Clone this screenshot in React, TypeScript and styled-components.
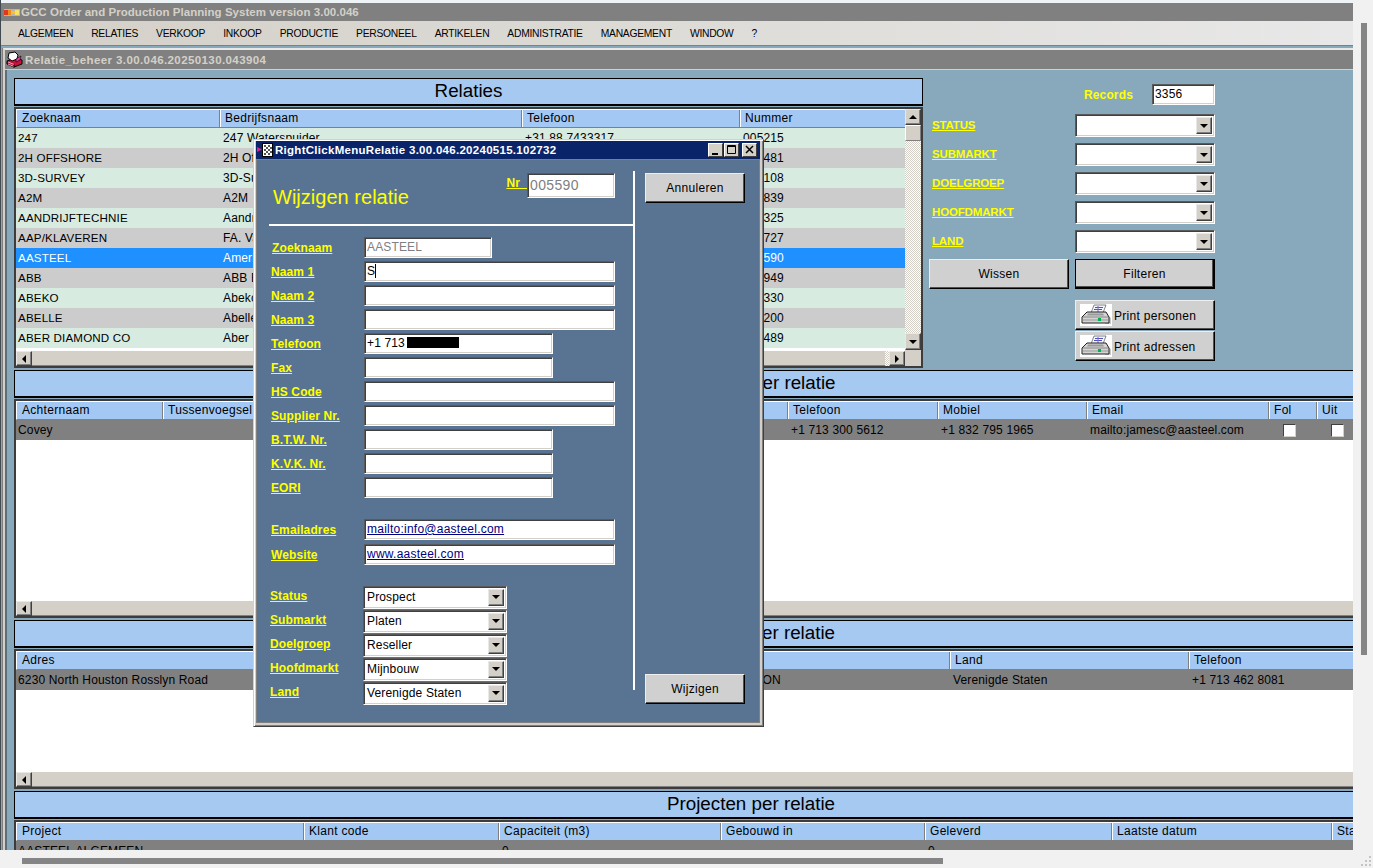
import React from "react";
import styled, { createGlobalStyle, css } from "styled-components";

const Global = createGlobalStyle`
  html, body { margin: 0; padding: 0; height: 100%; overflow: hidden; background: #f1f1f1; }
  #root { height: 100%; }
  * { box-sizing: border-box; }
  svg { flex: none; }
  body { font: 12px "Liberation Sans", Arial, sans-serif; letter-spacing: .15px; color: #000; }
`;

const sunken = css`
  background: #fff;
  border: 1px solid;
  border-color: #5a5a5a #fff #fff #5a5a5a;
  box-shadow: inset 1px 1px 0 #404040, inset -1px -1px 0 #d4d0c8;
`;

const Shell = styled.div`
  display: grid;
  grid-template-columns: 1353px 20px;
  grid-template-rows: 850px 18px;
  width: 1373px;
  height: 868px;
  overflow: hidden;
`;
const Viewport = styled.div`
  position: relative;
  overflow: hidden;
  background: #88a9bb;
  border-left: 1px solid #3f4a52;
`;
const TopGap = styled.div`height: 3px; background: #eef3f6;`;
const AppBar = styled.div`
  height: 18px;
  background: #808080;
  color: #d4d0c8;
  font-weight: 700;
  font-size: 11.5px;
  letter-spacing: .04px;
  display: flex;
  align-items: center;
  gap: 1px;
  padding-left: 1px;
  white-space: nowrap;
`;
const MenuBar = styled.div`
  height: 25px;
  background: linear-gradient(to right, #d4d0c8 0, #dcdad5 45%, #e8e8e8 100%);
  display: flex;
  align-items: center;
  gap: 18px;
  padding-left: 17px;
  border-bottom: 1px solid #808080;
`;
const MenuItem = styled.span`font-size: 10.3px; letter-spacing: -.26px; white-space: nowrap;`;
const MdiFrame = styled.div`
  margin: 2px 0 0 2px;
  width: 1600px;
  border-top: 2px solid #e8e8e8;
  border-left: 2px solid #d4d0c8;
  box-shadow: -1px 0 0 #808080;
`;
const MdiTitle = styled.div`
  height: 20px;
  background: #808080;
  color: #d4d0c8;
  font-weight: 700;
  font-size: 11.5px;
  letter-spacing: .4px;
  display: flex;
  align-items: center;
  gap: 2px;
  padding-left: 1px;
  border-bottom: 1px solid #d4d0c8;
  white-space: nowrap;
`;
const Client = styled.div`
  padding: 8px 0 0 9px;
  height: 800px;
  background: #88a9bb;
  display: flex;
  flex-direction: column;
  box-shadow: inset 2px 0 0 #5a6f7c;
`;
const TopSection = styled.div`display: flex; flex: none;`;
const TopLeft = styled.div`width: 909px;`;
const Heading = styled.div`
  flex: none;
  height: 27px;
  margin-bottom: 2px;
  width: ${p => p.$w || 1474}px;
  background: #a5c9f1;
  border: 1px solid #000;
  box-shadow: 0 1px 0 #000;
  font-size: 18.8px;
  letter-spacing: 0;
  padding: 0 0 1px 0;
  display: flex;
  align-items: center;
  justify-content: center;
  white-space: nowrap;
`;
const Frame = styled.div`
  flex: none;
  width: ${p => p.$w || 1474}px;
  height: ${p => p.$h}px;
  margin-bottom: 2px;
  background: #fff;
  border: 2px solid #3c3c3c;
  display: grid;
  grid-template-columns: ${p => (p.$vs ? "1fr 16px" : "1fr")};
  grid-template-rows: 1fr ${p => (p.$noHs ? "" : "16px")};
  overflow: hidden;
`;
const TableArea = styled.div`overflow: hidden; min-width: 0;`;
const HeadRow = styled.div`
  display: grid;
  grid-template-columns: ${p => p.$cols};
  height: 19px;
  background: #a3c8f4;
  border-top: 1px solid #fff;
  border-bottom: 1px solid #808080;
  border-left: 1px solid #fff;
`;
const HeadCell = styled.div`
  padding-left: 4px;
  line-height: 17px;
  letter-spacing: .3px;
  white-space: nowrap;
  overflow: hidden;
  &:first-child { padding-left: 5px; }
  & + & { border-left: 1px solid #fff; box-shadow: inset 1px 0 0 #a3c8f4, -1px 0 0 #808080; }
`;
const DataRow = styled.div`
  display: grid;
  grid-template-columns: ${p => p.$cols};
  height: 20px;
  background: ${p => p.$bg};
  color: ${p => (p.$sel ? "#fff" : "#000")};
`;
const DataCell = styled.div`
  padding-left: 4px;
  line-height: 20px;
  white-space: nowrap;
  overflow: hidden;
  font-size: ${p => (p.$caps ? "11.6px" : "12px")};
  &:first-child { padding-left: 2px; }
`;
const CheckCell = styled.div`
  width: 34px;
  height: 20px;
  display: flex;
  align-items: center;
  justify-content: center;
`;
const CheckBox = styled.span`
  width: 13px; height: 13px;
  background: #fff;
  border: 1px solid;
  border-color: #404040 #d4d0c8 #d4d0c8 #404040;
`;
const HScroll = styled.div`
  display: flex;
  background: #d4d0c8;
  border-top: 1px solid #fff;
  box-shadow: inset 0 -1px 0 #808080;
  overflow: hidden;
`;
const Dither = styled.div`
  background: conic-gradient(#fff 25%, #d4d0c8 0 50%, #fff 0 75%, #d4d0c8 0) 0 0 / 2px 2px;
`;
const HFill = styled.div`flex: 1;`;
const HDither = styled(Dither)`width: 4px;`;
const VScroll = styled.div`
  display: flex;
  flex-direction: column;
`;
const VThumb = styled.div`
  height: 16px;
  background: #d4d0c8;
  border: 1px solid;
  border-color: #fff #808080 #808080 #fff;
`;
const VDither = styled(Dither)`flex: 1;`;
const Corner = styled.div`background: #d4d0c8;`;
const ArrowBtn = styled.div`
  flex: none;
  width: ${p => p.$w || 16}px;
  height: ${p => p.$h || 16}px;
  background: #d4d0c8;
  border: 1px solid;
  border-color: #e8e8e8 #404040 #404040 #e8e8e8;
  box-shadow: inset -1px -1px 0 #808080;
  display: flex;
  align-items: center;
  justify-content: center;
`;
const Tri = styled.span`
  width: 0; height: 0;
  border-style: solid;
  ${p => p.$dir === "up" && "border-width: 0 4px 4px; border-color: transparent transparent #000;"}
  ${p => p.$dir === "down" && "border-width: 4px 4px 0; border-color: #000 transparent transparent;"}
  ${p => p.$dir === "left" && "border-width: 4px 4px 4px 0; border-color: transparent #000 transparent transparent;"}
  ${p => p.$dir === "right" && "border-width: 4px 0 4px 4px; border-color: transparent transparent transparent #000;"}
`;

/* right filter panel */
const FilterPanel = styled.div`
  width: 286px;
  margin-left: 6px;
  padding-top: 6px;
  display: flex;
  flex-direction: column;
  gap: 6px;
`;
const RecordsRow = styled.div`
  display: flex;
  justify-content: flex-end;
  align-items: center;
  gap: 19px;
  margin-bottom: 3px;
`;
const RecordsLabel = styled.span`color: #ffff00; font-weight: 700;`;
const RecordsBox = styled.div`
  ${sunken};
  width: 63px;
  height: 21px;
  padding-left: 2px;
  line-height: 19px;
`;
const FilterRow = styled.div`
  display: grid;
  grid-template-columns: 146px 140px;
  align-items: center;
`;
const YLabel = styled.span`
  color: #ffff00;
  font-weight: 700;
  font-size: ${p => (p.$caps ? "11.5px" : "12px")};
  text-decoration: underline;
  letter-spacing: ${p => (p.$caps ? "-.15px" : ".12px")};
  padding-left: ${p => p.$pad ?? 0}px;
  margin-top: ${p => p.$up ?? 0}px;
  white-space: nowrap;
`;
const Combo = styled.div`
  ${sunken};
  width: ${p => p.$w}px;
  height: ${p => p.$h}px;
  display: flex;
  align-items: center;
  justify-content: space-between;
  padding: 2px 2px 2px 3px;
  white-space: nowrap;
`;
const ComboBtn = styled.div`
  flex: none;
  width: 16px;
  height: 17px;
  background: #d4d0c8;
  border: 1px solid;
  border-color: #e8e8e8 #404040 #404040 #e8e8e8;
  box-shadow: inset -1px -1px 0 #808080;
  display: flex;
  align-items: center;
  justify-content: center;
`;
const ButtonRow = styled.div`display: flex; gap: 6px;`;
const WinButton = styled.div`
  width: ${p => p.$w || 140}px;
  height: 30px;
  background: #d0d0d0;
  border: 1px solid;
  border-color: #eee #000 #000 #eee;
  box-shadow: inset -1px -1px 0 #505050;
  letter-spacing: .3px;
  display: flex;
  align-items: center;
  justify-content: center;
  ${p => p.$def && "border: 2px solid #000; border-top-width: 1px; border-left-width: 1px;"}
`;
const PrintStack = styled.div`
  display: flex;
  flex-direction: column;
  align-items: flex-end;
  gap: 1px;
  margin-top: 5px;
`;
const PrintButton = styled(WinButton)`
  justify-content: flex-start;
  gap: 2px;
  padding: 1px 0 0 4px;
`;
const PrintIcon = styled.span`
  flex: none;
  width: 32px; height: 22px;
  margin-top: -1px;
  background: #fff;
  display: block;
  line-height: 0;
`;

/* dialog */
const Dialog = styled.div`
  position: absolute;
  left: 252px;
  top: 139px;
  width: 511px;
  height: 588px;
  background: #d4d0c8;
  border: 1px solid;
  border-color: #d4d0c8 #404040 #404040 #d4d0c8;
  box-shadow: inset 1px 1px 0 #fff, inset -1px -1px 0 #808080;
  padding: 1px 3px 3px 2px;
  display: flex;
  flex-direction: column;
`;
const DialogTitle = styled.div`
  height: 18px;
  flex: none;
  background: #0a246a;
  color: #fff;
  font-weight: 700;
  font-size: 11.5px;
  letter-spacing: .28px;
  display: flex;
  align-items: center;
  padding: 0 3px 0 1px;
  gap: 1px;
  white-space: nowrap;
`;
const TitleSpacer = styled.span`flex: 1;`;
const CaptionBtn = styled.span`
  flex: none;
  width: 15px; height: 14px;
  margin-left: ${p => p.$gap || 0}px;
  background: #d4d0c8;
  border: 1px solid;
  border-color: #fff #404040 #404040 #fff;
  display: block;
  line-height: 0;
`;
const DialogBody = styled.div`
  flex: 1;
  background: #587492;
  border: 1px solid #808080;
  display: grid;
  grid-template-columns: 376px 2px 1fr;
`;
const FormPane = styled.div`display: flex; flex-direction: column;`;
const FormHead = styled.div`
  height: 64px;
  padding: 13px 18px 0 16px;
  display: flex;
  justify-content: space-between;
  align-items: flex-start;
`;
const FormTitle = styled.span`
  color: #ffff00;
  font-size: 20px;
  letter-spacing: .02px;
  margin-top: 13px;
`;
const NrGroup = styled.div`display: flex; align-items: flex-start;`;
const NrLabel = styled.span`
  color: #ffff00;
  font-weight: 700;
  text-decoration: underline;
  white-space: pre;
  margin-top: 3px;
`;
const NrBox = styled.div`
  ${sunken};
  width: 88px;
  height: 25px;
  color: #808080;
  font-size: 14px;
  letter-spacing: .35px;
  line-height: 22px;
  padding-left: 2px;
`;
const HRule = styled.div`height: 2px; margin-left: 12px; background: #fff;`;
const VRule = styled.div`margin-top: 11px; height: 519px; background: #fff;`;
const Fields = styled.div`
  padding: 11px 0 0 14px;
  display: flex;
  flex-direction: column;
`;
const FieldRow = styled.div`
  display: grid;
  grid-template-columns: 93px auto;
  justify-content: start;
  align-items: center;
  height: 21px;
  margin-bottom: ${p => p.$mb ?? 3}px;
`;
const Field = styled.div`
  ${sunken};
  width: ${p => p.$w}px;
  height: 21px;
  padding-left: 2px;
  line-height: 19px;
  white-space: nowrap;
  color: ${p => (p.$off ? "#808080" : "#000")};
`;
const Link = styled.span`color: #000080; text-decoration: underline; letter-spacing: .24px;`;
const Redacted = styled.span`
  display: inline-block;
  width: 52px; height: 11px;
  margin-left: -1px;
  background: #000;
  vertical-align: -1px;
`;
const Caret = styled.span`
  display: inline-block;
  width: 1px; height: 14px;
  background: #000;
  vertical-align: -3px;
`;
const ComboRow = styled.div`
  display: grid;
  grid-template-columns: 93px auto;
  justify-content: start;
  align-items: center;
  height: 24px;
  margin-left: -1px;
`;
const SidePane = styled.div`
  padding: 13px 15px 18px 10px;
  display: flex;
  flex-direction: column;
  justify-content: space-between;
  align-items: flex-start;
`;
const DialogButton = styled(WinButton)`width: 100px;`;

/* bottom & right browser scroll bars */
const RightStrip = styled.div`
  grid-row: 1 / 3;
  grid-column: 2;
  background: #f1f1f1;
  padding: 23px 6px 0 8px;
  position: relative;
`;
const RThumb = styled.div`width: 6px; height: 632px; background: #858585;`;
const BottomStrip = styled.div`
  background: #f1f1f1;
  border-bottom-left-radius: 6px;
  padding: 8px 0 0 22px;
`;
const BThumb = styled.div`width: 921px; height: 6px; background: #858585;`;
const Grip = styled.svg`position: absolute; right: 0; bottom: 0;`;

const AppIcon = () => (
  <svg width="18" height="9" viewBox="0 0 18 9">
    <rect x="2" y="1" width="16" height="7" fill="#b9b5ab" />
    <rect x="2" y="2" width="4" height="5" fill="#e0381c" />
    <rect x="6" y="2" width="3" height="5" fill="#f08a1e" />
    <rect x="9" y="3" width="4" height="3" fill="#f7c02e" />
    <rect x="13" y="2" width="4" height="5" fill="#f5e26a" />
  </svg>
);
const MdiIcon = () => (
  <svg width="17" height="17" viewBox="0 0 17 17">
    <path d="M1 10l8-3 7 2v4l-8 3-7-3z" fill="#c81038" stroke="#000" />
    <path d="M2 11l6 2.500M2 13l6 2.500" stroke="#f0a0c0" />
    <path d="M8 13.500v3" stroke="#000" />
    <path d="M2 7l1-5 6-1 3 3-1 4-5 2z" fill="#fff" stroke="#000" />
    <path d="M10 8l5-3-1 4-4 2z" fill="#e040a0" stroke="#000" strokeWidth=".6" />
  </svg>
);
const DlgIcon = () => (
  <svg width="17" height="16" viewBox="0 0 17 16">
    <rect x="5.500" y="1.500" width="10" height="13" fill="#fff" stroke="#000" />
    <path d="M7 3h2v2H7zM11 3h2v2h-2zM9 5h2v2H9zM13 5h2v2h-2zM7 7h2v2H7zM11 7h2v2h-2zM9 9h2v2H9zM13 9h2v2h-2zM7 11h2v2H7zM11 11h2v2h-2z" fill="#555" />
    <path d="M0 5l5 2.500L0 10z" fill="#e0208a" />
  </svg>
);
const Printer = () => (
  <PrintIcon>
    <svg width="32" height="22" viewBox="0 0 32 22">
      <path d="M25 20h6v-6l-4-3z" fill="#c8c8c8" />
      <path d="M11 9l3-8h12l-3 8z" fill="#f4f4ff" stroke="#555" strokeWidth=".7" />
      <path d="M15 3.500h8M14 5.500h8" stroke="#5050c0" />
      <path d="M18 2v6" stroke="#7070d0" />
      <path d="M7 8h19l3 5v6H2v-6z" fill="#d4d4d4" stroke="#222" />
      <path d="M3 13h25" stroke="#888" />
      <path d="M3 16h25" stroke="#999" />
      <path d="M8 9.500h15l1 2H7z" fill="#9a9a9a" />
      <rect x="18" y="14" width="3" height="3" fill="#00b050" />
    </svg>
  </PrintIcon>
);

const Arrow = ({ dir }: { dir: string }) => <Tri $dir={dir} />;

type GridData = {
  cols: number[];
  head: string[];
  rows: { cells: React.ReactNode[]; bg: string; sel?: boolean }[];
  caps?: boolean;
};

const DataGrid = ({ cols, head, rows, caps }: GridData) => {
  const tpl = cols.map(c => `${c}px`).join(" ");
  return (
    <TableArea>
      <HeadRow $cols={tpl}>
        {head.map((h, i) => <HeadCell key={i}>{h}</HeadCell>)}
      </HeadRow>
      {rows.map((r, i) => (
        <DataRow key={i} $cols={tpl} $bg={r.bg} $sel={r.sel}>
          {r.cells.map((c, j) => <DataCell key={j} $caps={caps && j === 0}>{c}</DataCell>)}
        </DataRow>
      ))}
    </TableArea>
  );
};

const HBar = ({ full }: { full?: boolean }) => (
  <HScroll>
    <ArrowBtn $h={15}><Arrow dir="left" /></ArrowBtn>
    <HFill />
    {full && <HDither />}
    {full && <ArrowBtn $h={15}><Arrow dir="right" /></ArrowBtn>}
  </HScroll>
);

const G = "#d8ebe0";
const K = "#cccccc";
const relaties: [string, string, string, string][] = [
  ["247", "247 Waterspuider", "+31 88 7433317", "005215"],
  ["2H OFFSHORE", "2H Offshore", "", "005481"],
  ["3D-SURVEY", "3D-Survey", "", "005108"],
  ["A2M", "A2M", "", "004839"],
  ["AANDRIJFTECHNIE", "Aandrijftechniek", "", "005325"],
  ["AAP/KLAVEREN", "FA. Van Klaveren", "", "004727"],
  ["AASTEEL", "American Steel", "", "005590"],
  ["ABB", "ABB B.V.", "", "004949"],
  ["ABEKO", "Abeko", "", "005330"],
  ["ABELLE", "Abelle", "", "005200"],
  ["ABER DIAMOND CO", "Aber Diamond", "", "005489"],
];
const menu = ["ALGEMEEN", "RELATIES", "VERKOOP", "INKOOP", "PRODUCTIE", "PERSONEEL", "ARTIKELEN", "ADMINISTRATIE", "MANAGEMENT", "WINDOW", "?"];
const filters = ["STATUS", "SUBMARKT", "DOELGROEP", "HOOFDMARKT", "LAND"];
const combos = [["Status", "Prospect"], ["Submarkt", "Platen"], ["Doelgroep", "Reseller"], ["Hoofdmarkt", "Mijnbouw"], ["Land", "Verenigde Staten"]];

export default function App() {
  return (
    <Shell>
      <Global />
      <Viewport>
        <TopGap />
        <AppBar><AppIcon />GCC Order and Production Planning System version 3.00.046</AppBar>
        <MenuBar>{menu.map(m => <MenuItem key={m}>{m}</MenuItem>)}</MenuBar>
        <MdiFrame>
          <MdiTitle><MdiIcon />Relatie_beheer 3.00.046.20250130.043904</MdiTitle>
          <Client>
            <TopSection>
              <TopLeft>
                <Heading $w={909}>Relaties</Heading>
                <Frame $w={909} $h={261} $vs>
                  <DataGrid
                    caps
                    cols={[203, 302, 218, 166]}
                    head={["Zoeknaam", "Bedrijfsnaam", "Telefoon", "Nummer"]}
                    rows={relaties.map((r, i) => ({
                      cells: r,
                      bg: i === 6 ? "#1e90ff" : i % 2 ? K : G,
                      sel: i === 6,
                    }))}
                  />
                  <VScroll>
                    <ArrowBtn $h={16}><Arrow dir="up" /></ArrowBtn>
                    <VThumb />
                    <VDither />
                    <ArrowBtn $h={17}><Arrow dir="down" /></ArrowBtn>
                  </VScroll>
                  <HBar full />
                  <Corner />
                </Frame>
              </TopLeft>
              <FilterPanel>
                <RecordsRow>
                  <RecordsLabel>Records</RecordsLabel>
                  <RecordsBox>3356</RecordsBox>
                </RecordsRow>
                {filters.map(f => (
                  <FilterRow key={f}>
                    <YLabel $caps $pad={3} $up={-2}>{f}</YLabel>
                    <Combo $w={140} $h={23}>
                      <span />
                      <ComboBtn><Arrow dir="down" /></ComboBtn>
                    </Combo>
                  </FilterRow>
                ))}
                <ButtonRow>
                  <WinButton>Wissen</WinButton>
                  <WinButton $def>Filteren</WinButton>
                </ButtonRow>
                <PrintStack>
                  <PrintButton><Printer />Print personen</PrintButton>
                  <PrintButton><Printer />Print adressen</PrintButton>
                </PrintStack>
              </FilterPanel>
            </TopSection>

            <Heading>Personen per relatie</Heading>
            <Frame $h={219}>
              <DataGrid
                cols={[146, 125, 250, 250, 150, 149, 182, 48, 100]}
                head={["Achternaam", "Tussenvoegsel", "", "", "Telefoon", "Mobiel", "Email", "Fol", "Uit"]}
                rows={[{
                  bg: "#808080",
                  cells: ["Covey", "", "", "", "+1 713 300 5612", "+1 832 795 1965", "mailto:jamesc@aasteel.com",
                    <CheckCell key="f"><CheckBox /></CheckCell>,
                    <CheckCell key="u"><CheckBox /></CheckCell>],
                }]}
              />
              <HBar />
            </Frame>

            <Heading>Adressen per relatie</Heading>
            <Frame $h={140}>
              <DataGrid
                cols={[333, 367, 233, 239, 300]}
                head={["Adres", "", "", "Land", "Telefoon"]}
                rows={[{
                  bg: "#808080",
                  cells: ["6230 North Houston Rosslyn Road", "", "HOUSTON", "Verenigde Staten", "+1 713 462 8081"],
                }]}
              />
              <HBar />
            </Frame>

            <Heading>Projecten per relatie</Heading>
            <Frame $h={120} $noHs>
              <DataGrid
                cols={[287, 195, 222, 204, 187, 220, 150]}
                head={["Project", "Klant code", "Capaciteit (m3)", "Gebouwd in", "Geleverd", "Laatste datum", "Status"]}
                rows={[{
                  bg: "#808080",
                  cells: ["AASTEEL ALGEMEEN", "", "0", "", "0", "", ""],
                }]}
              />
            </Frame>
          </Client>
        </MdiFrame>

        <Dialog>
          <DialogTitle>
            <DlgIcon />
            RightClickMenuRelatie 3.00.046.20240515.102732
            <TitleSpacer />
            <CaptionBtn>
              <svg width="13" height="12" viewBox="0 0 13 12"><path d="M3 9h6v2H3z" /></svg>
            </CaptionBtn>
            <CaptionBtn $gap={0}>
              <svg width="13" height="12" viewBox="0 0 13 12"><path d="M2.500 1.500h8v8h-8zM2.500 2.500h8" fill="none" stroke="#000" /></svg>
            </CaptionBtn>
            <CaptionBtn $gap={2}>
              <svg width="13" height="12" viewBox="0 0 13 12"><path d="M3 2l7 7M10 2l-7 7" stroke="#000" strokeWidth="1.500" /></svg>
            </CaptionBtn>
          </DialogTitle>
          <DialogBody>
            <FormPane>
              <FormHead>
                <FormTitle>Wijzigen relatie</FormTitle>
                <NrGroup>
                  <NrLabel>Nr  </NrLabel>
                  <NrBox>005590</NrBox>
                </NrGroup>
              </FormHead>
              <HRule />
              <Fields>
                <FieldRow><YLabel $pad={1}>Zoeknaam</YLabel><Field $w={128} $off>AASTEEL</Field></FieldRow>
                <FieldRow><YLabel>Naam 1</YLabel><Field $w={251}>S<Caret /></Field></FieldRow>
                <FieldRow><YLabel>Naam 2</YLabel><Field $w={251} /></FieldRow>
                <FieldRow><YLabel>Naam 3</YLabel><Field $w={251} /></FieldRow>
                <FieldRow><YLabel>Telefoon</YLabel><Field $w={189}>+1 713 <Redacted /></Field></FieldRow>
                <FieldRow><YLabel>Fax</YLabel><Field $w={189} /></FieldRow>
                <FieldRow><YLabel>HS Code</YLabel><Field $w={251} /></FieldRow>
                <FieldRow><YLabel>Supplier Nr.</YLabel><Field $w={251} /></FieldRow>
                <FieldRow><YLabel>B.T.W. Nr.</YLabel><Field $w={189} /></FieldRow>
                <FieldRow><YLabel>K.V.K. Nr.</YLabel><Field $w={189} /></FieldRow>
                <FieldRow $mb={21}><YLabel>EORI</YLabel><Field $w={189} /></FieldRow>
                <FieldRow $mb={4}><YLabel>Emailadres</YLabel><Field $w={251}><Link>mailto:info@aasteel.com</Link></Field></FieldRow>
                <FieldRow $mb={20}><YLabel>Website</YLabel><Field $w={251}><Link>www.aasteel.com</Link></Field></FieldRow>
                {combos.map(([l, v]) => (
                  <ComboRow key={l}>
                    <YLabel $up={-3}>{l}</YLabel>
                    <Combo $w={144} $h={23}>
                      {v}
                      <ComboBtn><Arrow dir="down" /></ComboBtn>
                    </Combo>
                  </ComboRow>
                ))}
              </Fields>
            </FormPane>
            <VRule />
            <SidePane>
              <DialogButton>Annuleren</DialogButton>
              <DialogButton>Wijzigen</DialogButton>
            </SidePane>
          </DialogBody>
        </Dialog>
      </Viewport>
      <RightStrip>
        <RThumb />
        <Grip width="14" height="14" viewBox="0 0 14 14">
          <path d="M10 2h2v2h-2zM6 6h2v2H6zM10 6h2v2h-2zM2 10h2v2H2zM6 10h2v2H6zM10 10h2v2h-2z" fill="#c4c4c4" />
        </Grip>
      </RightStrip>
      <BottomStrip><BThumb /></BottomStrip>
    </Shell>
  );
}
